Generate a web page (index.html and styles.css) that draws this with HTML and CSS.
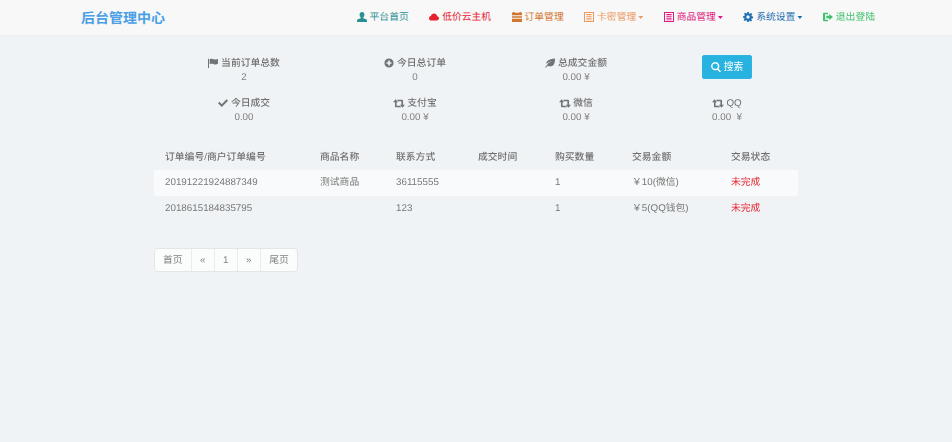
FILE: index.html
```html
<!DOCTYPE html>
<html lang="zh-CN">
<head>
<meta charset="utf-8">
<title>后台管理中心</title>
<link rel="stylesheet" href="styles.css">
</head>
<body>
<svg class="defs" width="0" height="0" aria-hidden="true">
  <symbol id="i-user" viewBox="0 0 12 12"><path d="M6 0c1.800 0 2.900 1.300 2.900 3.200 0 1.300-.6 2.600-1.400 3.200v1l3.500 1.400c.6.300 1 .7 1 1.400V12H0v-1.800c0-.7.400-1.100 1-1.400l3.500-1.400v-1C3.700 5.800 3.100 4.500 3.100 3.200 3.100 1.300 4.200 0 6 0z"/></symbol>
  <symbol id="i-cloud" viewBox="0 0 12 12"><path d="M3 10.200C1.300 10.200 0 9 0 7.400 0 6 1 4.900 2.300 4.700 2.800 3 4.300 1.900 6 1.900c1.900 0 3.400 1.300 3.800 3.100 1.300.2 2.200 1.200 2.200 2.600 0 1.500-1.200 2.600-2.700 2.600z"/></symbol>
  <symbol id="i-tasks" viewBox="0 0 12 12"><path d="M1 0h2v1h6V0h2v1h1v3H0V1h1zM0 5h12v2H0zM0 8h12v4H0z"/></symbol>
  <symbol id="i-book" viewBox="0 0 12 12"><path fill-rule="evenodd" d="M0 0h12v12H0zM1.200 1.200v9.600h9.600V1.200zM2.800 2.500h6.400V4H2.800zM2.800 5h6.400v1H2.800zM2.800 7h6.400v1H2.800zM2.800 9h6.400v.8H2.800z"/></symbol>
  <symbol id="i-cog" viewBox="0 0 12 12"><path fill-rule="evenodd" d="M5 0h2l.3 1.700 1.100.5L9.900 1.200l1.200 1.400-1 1.400.5 1.100 1.400.3v2l-1.700.3-.4 1.100 1 1.400-1.400 1.300-1.400-1-1.100.4L7 12H5l-.3-1.700-1.100-.4-1.400 1-1.400-1.400 1-1.400-.4-1.100L0 7V5l1.700-.3.5-1.100-1-1.400 1.400-1.400 1.400 1 1.100-.5zM6 4a2 2 0 1 0 0 4 2 2 0 0 0 0-4z"/></symbol>
  <symbol id="i-out" viewBox="0 0 12 12"><path d="M1.500 1H6v1.800H2.500v6.400H6V11H1.500C.7 11 0 10.300 0 9.500v-7C0 1.700.7 1 1.500 1zM7.500 2.500 12 6 7.500 9.500V7.500H4v-3h3.500z"/></symbol>
  <symbol id="i-flag" viewBox="0 0 12 12"><path d="M0 1h1.200v11H0zM2 1.500c2-1 3.500-.5 5 0s3 .5 5-.2V7c-2 1-3.500 1-5 .4s-3-.8-5 0z"/></symbol>
  <symbol id="i-plus" viewBox="0 0 12 12"><path fill-rule="evenodd" d="M6 .5a5.500 5.500 0 1 1 0 11 5.500 5.500 0 0 1 0-11zM5 3v2H3v2h2v2h2V7h2V5H7V3z"/></symbol>
  <symbol id="i-leaf" viewBox="0 0 12 12"><path d="M12 .5c0 5-1 10-6.500 9.500-1 0-1.800-.3-2.400-.8L1.300 11.500 0 11l2.400-2.700C3.500 6 6 4.500 8.500 3.500 5.800 4 3.500 5.200 1.900 7 .8 3.500 4.500 1.500 12 .5z"/></symbol>
  <symbol id="i-ok" viewBox="0 0 12 12"><path d="M10.300 1.500 12 3.200 4.500 10.800 0 6.300 1.700 4.600l2.800 2.800z"/></symbol>
  <symbol id="i-retweet" viewBox="0 0 14 10"><path d="M3 0 6 3.500H4.200V7.500H8L9.500 9.300H3.500c-.7 0-1.200-.5-1.200-1.200V3.500H0zM4.500.7H10.500c.7 0 1.200.5 1.200 1.200V6.500H14L11 10 8 6.500H9.800V2.500H6z"/></symbol>
  <symbol id="i-search" viewBox="0 0 12 12"><path fill-rule="evenodd" d="M5 0a5 5 0 0 1 4 8l3 3-1.300 1.300-3-3A5 5 0 1 1 5 0zm0 1.800a3.200 3.200 0 1 0 0 6.400 3.200 3.200 0 0 0 0-6.400z"/></symbol>
</svg>

<header class="navbar">
  <a class="brand">后台管理中心</a>
  <nav class="nav">
    <a class="nav-link c-teal"><svg class="ico"><use href="#i-user"/></svg>平台首页</a>
    <a class="nav-link c-red"><svg class="ico"><use href="#i-cloud"/></svg>低价云主机</a>
    <a class="nav-link c-brown"><svg class="ico"><use href="#i-tasks"/></svg>订单管理</a>
    <a class="nav-link c-orange"><svg class="ico"><use href="#i-book"/></svg>卡密管理<span class="caret"></span></a>
    <a class="nav-link c-pink"><svg class="ico"><use href="#i-book"/></svg>商品管理<span class="caret"></span></a>
    <a class="nav-link c-blue"><svg class="ico"><use href="#i-cog"/></svg>系统设置<span class="caret"></span></a>
    <a class="nav-link c-green"><svg class="ico"><use href="#i-out"/></svg>退出登陆</a>
  </nav>
</header>

<main class="content">
  <section class="stats">
    <div class="stat"><div class="stat-label"><svg class="ico ico-s"><use href="#i-flag"/></svg>当前订单总数</div><div>2</div></div>
    <div class="stat"><div class="stat-label"><svg class="ico ico-s"><use href="#i-plus"/></svg>今日总订单</div><div>0</div></div>
    <div class="stat"><div class="stat-label"><svg class="ico ico-s"><use href="#i-leaf"/></svg>总成交金额</div><div>0.00 ¥</div></div>
    <div class="stat"><button class="btn-search"><svg class="ico ico-w"><use href="#i-search"/></svg>搜索</button></div>
    <div class="stat"><div class="stat-label"><svg class="ico ico-s"><use href="#i-ok"/></svg>今日成交</div><div>0.00</div></div>
    <div class="stat"><div class="stat-label"><svg class="ico ico-r"><use href="#i-retweet"/></svg>支付宝</div><div>0.00 ¥</div></div>
    <div class="stat"><div class="stat-label"><svg class="ico ico-r"><use href="#i-retweet"/></svg>微信</div><div>0.00 ¥</div></div>
    <div class="stat"><div class="stat-label"><svg class="ico ico-r"><use href="#i-retweet"/></svg>QQ</div><div>0.00 &nbsp;¥</div></div>
  </section>

  <table class="orders">
    <colgroup>
      <col class="w1"><col class="w2"><col class="w3"><col class="w4"><col class="w5"><col class="w6"><col class="w7">
    </colgroup>
    <thead>
      <tr><th>订单编号/商户订单编号</th><th>商品名称</th><th>联系方式</th><th>成交时间</th><th>购买数量</th><th>交易金额</th><th>交易状态</th></tr>
    </thead>
    <tbody>
      <tr class="striped"><td>20191221924887349</td><td>测试商品</td><td>36115555</td><td></td><td>1</td><td>￥10(微信)</td><td class="danger">未完成</td></tr>
      <tr><td>2018615184835795</td><td></td><td>123</td><td></td><td>1</td><td>￥5(QQ钱包)</td><td class="danger">未完成</td></tr>
    </tbody>
  </table>

  <ul class="pager">
    <li>首页</li><li>«</li><li>1</li><li>»</li><li>尾页</li>
  </ul>
</main>
</body>
</html>
```

FILE: styles.css
```css
* { box-sizing: border-box; }
html, body { margin: 0; padding: 0; }
body {
  width: 952px;
  height: 442px;
  overflow: hidden;
  background: #f0f3f5;
  color: #777;
  font-family: "Liberation Sans", "Noto Sans CJK SC", sans-serif;
  font-size: 9.8px;
  line-height: 14px;
  text-rendering: geometricPrecision;
  filter: blur(0.4px);
}
.defs { position: absolute; }
.navbar {
  display: flex;
  align-items: center;
  height: 36px;
  padding: 0 77px 0 81px;
  background: #f8f8f8;
  border-bottom: 1px solid #eef0f1;
}
.brand { color: #4a9fe6; font-size: 14px; font-weight: 700; line-height: 20px; }
.nav { display: flex; gap: 20.4px; margin-left: auto; }
.nav-link { display: flex; align-items: center; white-space: nowrap; }
.ico { width: 10px; height: 10px; margin: 0 3px 2px 0; fill: currentColor; flex: none; }
.ico-s { color: #6f7479; }
.ico-r { color: #6f7479; width: 12px; height: 9px; margin-right: 2px; }
.ico-w { color: #fff; margin-bottom: 0; }
.caret {
  margin-left: 2px;
  width: 5px;
  height: 3px;
  background: currentColor;
  clip-path: polygon(0 0, 100% 0, 50% 100%);
}
.c-teal { color: #2b8e94; }
.c-red { color: #e5202c; }
.c-brown { color: #d2752d; }
.c-orange { color: #ee9b63; }
.c-pink { color: #e01a80; }
.c-blue { color: #1e6fb4; }
.c-green { color: #3fc26d; }

.content { margin: 0 154px; }
.stats {
  display: grid;
  grid-template-columns: 180px 162px 160px 142px;
  grid-auto-rows: 40px;
  padding-top: 21px;
  text-align: center;
}
.stat { display: flex; flex-direction: column; align-items: center; color: #808080; }
.stat-label { color: #707070; font-weight: 500; display: flex; align-items: center; }
.btn-search {
  display: flex;
  align-items: center;
  justify-content: center;
  width: 50px;
  height: 24px;
  margin-top: -2px;
  padding: 0;
  border: 1px solid #2db4e0;
  border-radius: 2px;
  background: #27b2e0;
  color: #fff;
  font: inherit;
}

.orders {
  width: 644px;
  margin-top: 6px;
  table-layout: fixed;
  border-collapse: collapse;
}
.w1 { width: 155px; } .w2 { width: 76px; } .w3 { width: 82px; } .w4 { width: 77px; }
.w5 { width: 77px; } .w6 { width: 99px; } .w7 { width: 78px; }
.orders th, .orders td { padding: 0 0 0 11px; text-align: left; height: 26px; white-space: nowrap; }
.orders th { color: #707070; font-weight: 500; height: 27px; padding-top: 2px; }
.striped { background: #f9fafb; }
.danger { color: #e5202c; }

.pager {
  display: inline-flex;
  margin: 26px 0 0;
  padding: 0;
  list-style: none;
  background: #fbfcfc;
  border: 1px solid #e3e6e8;
  border-radius: 3px;
  color: #808080;
}
.pager li { height: 22px; line-height: 23px; padding: 0 8px; border-left: 1px solid #e9ecee; }
.pager li:first-child { border-left: 0; }
.pager li:nth-child(2), .pager li:nth-child(3), .pager li:nth-child(4) { padding: 0 8.3px; }
.pager li:last-child { padding: 0 8.5px; }
```
